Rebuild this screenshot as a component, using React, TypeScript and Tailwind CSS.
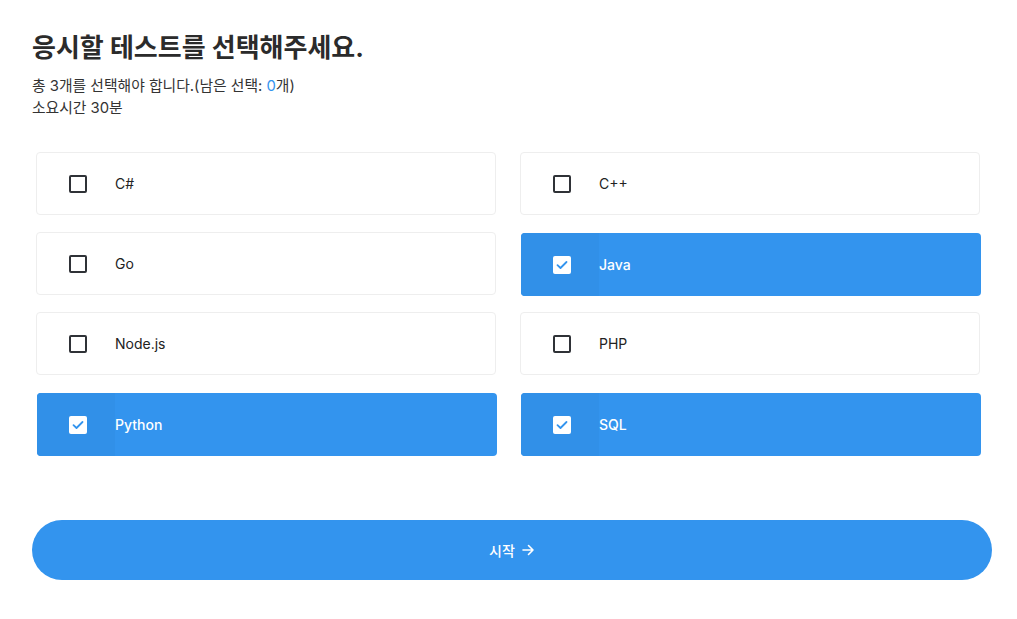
import React, { useState } from "react";

const items = ["C#", "C++", "Go", "Java", "Node.js", "PHP", "Python", "SQL"];

function CheckIcon() {
  return (
    <svg width="12" height="10" viewBox="0 0 12 10" fill="none">
      <path d="M1.5 5.2 L4.5 8 L10.5 2" stroke="#3394ee" strokeWidth="1.8" strokeLinecap="round" strokeLinejoin="round" />
    </svg>
  );
}

export default function App() {
  const [sel, setSel] = useState<string[]>(["Java", "Python", "SQL"]);
  const toggle = (n: string) =>
    setSel((s) => (s.includes(n) ? s.filter((x) => x !== n) : [...s, n]));
  return (
    <div
      className="h-[619px] overflow-hidden bg-white pl-[32px] pr-[25px] pt-[30px] text-[#333]"
      style={{ fontFamily: 'Inter, "Noto Sans CJK KR", sans-serif' }}
    >
      <h1 className="text-[26px] font-bold leading-[36px] text-[#2b2b2b]">
        응시할 테스트를 선택해주세요.
      </h1>
      <p className="mt-[9px] text-[14.8px] leading-[22px]">
        총 3개를 선택해야 합니다.(남은 선택: <span className="text-[#3394ee]">0</span>개)
      </p>
      <p className="text-[14.8px] leading-[22px]">소요시간 30분</p>

      <div className="mt-[33px] grid grid-cols-2 gap-x-[24px] gap-y-[17px] pl-[4px] pr-[12px]">
        {items.map((n) => {
          const on = sel.includes(n);
          return (
            <button
              key={n}
              onClick={() => toggle(n)}
              className={
                on
                  ? "flex h-[63px] translate-x-[1px] translate-y-[1px] items-stretch overflow-hidden rounded-[4px] bg-[#3394ee] text-left"
                  : "flex h-[63px] items-stretch overflow-hidden rounded-[4px] border border-[#eeeeee] bg-white text-left"
              }
            >
              <span
                className={
                  on
                    ? "flex w-[78px] items-center bg-[#3190e8] pl-[32px]"
                    : "flex w-[78px] items-center pl-[32px]"
                }
              >
                {on ? (
                  <span className="flex h-[18px] w-[18px] items-center justify-center rounded-[2px] bg-white">
                    <CheckIcon />
                  </span>
                ) : (
                  <span className="block h-[18px] w-[18px] rounded-[2px] border-2 border-[#2f3237]" />
                )}
              </span>
              <span
                className={
                  on
                    ? "flex items-center text-[14px] font-medium text-white"
                    : "flex items-center text-[14px] text-[#222]"
                }
              >
                {n}
              </span>
            </button>
          );
        })}
      </div>

      <button className="mt-[65px] flex h-[60px] w-full items-center justify-center gap-[6px] rounded-full bg-[#3394ee] text-[14px] font-medium text-white">
        시작
        <svg width="14" height="14" viewBox="0 0 14 14" fill="none">
          <path d="M2 7 H12 M7.5 2.5 L12 7 L7.5 11.5" stroke="white" strokeWidth="1.6" strokeLinecap="round" strokeLinejoin="round" />
        </svg>
      </button>
    </div>
  );
}
